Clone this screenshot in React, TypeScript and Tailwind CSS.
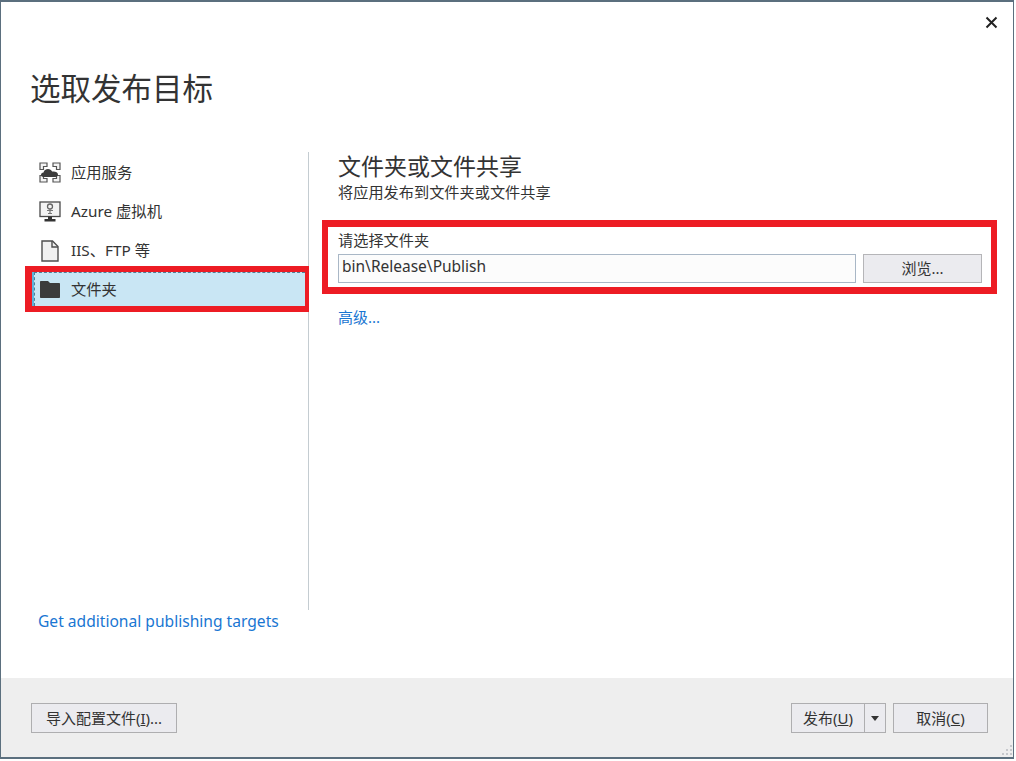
const font = '[font-family:"Noto_Sans","Noto_Sans_CJK_SC",sans-serif]'

const CloudIcon = () => (
  <svg width="22" height="21" viewBox="0 0 22 21" fill="none">
    <path d="M1 7.500V1h7v3.500H4.500v3H1zM14 1h7v6.500h-3.500v-3H14V1zM1 13.500h3.500v3H8V20H1v-6.500zM17.500 13.500H21V20h-7v-3.500h3.500v-3z" fill="#f4f4f4" stroke="#555555" strokeWidth="1.200" />
    <path d="M4.500 15c-1.500 0-2.500-1-2.500-2.300s1-2.300 2.500-2.300c.4-2 2.300-3.400 4.500-3.400 1.900 0 3.400 1 4.100 2.500 2.900-.5 5.900.6 5.900 3 0 1.500-1 2.500-2.500 2.500h-12z" fill="#3c3c3c" />
  </svg>
)

const MonitorIcon = () => (
  <svg width="22" height="21" viewBox="0 0 22 21" fill="none">
    <rect x="1" y="1" width="20" height="14.500" fill="#f3f3f3" stroke="#4a4a4a" strokeWidth="1.300" />
    <circle cx="11" cy="5.500" r="2.500" stroke="#666666" strokeWidth="1.300" />
    <path d="M8 9.500h6M9 12.500h4M11 8v5" stroke="#777777" strokeWidth="1.200" />
    <path d="M9 15.500h4V18H9zM5.500 18h11v2.500h-11z" fill="#333333" />
  </svg>
)

const FileIcon = () => (
  <svg width="18" height="22" viewBox="0 0 18 22" fill="none">
    <path d="M1 1h10.500L17 6.500V21H1V1z" fill="#f1f1f1" stroke="#4f4f4f" strokeWidth="1.400" />
    <path d="M11 1v6h6" stroke="#4f4f4f" strokeWidth="1.400" />
  </svg>
)

const FolderIcon = () => (
  <svg width="20" height="17" viewBox="0 0 20 17">
    <path d="M0 1c0-.6.4-1 1-1h7l2 2h9c.6 0 1 .4 1 1v13c0 .6-.4 1-1 1H1c-.6 0-1-.4-1-1V1z" fill="#3c3c3c" />
  </svg>
)

const Grip = () => (
  <svg width="14" height="14" viewBox="0 0 14 14" className="absolute right-0 bottom-0">
    <path d="M11 2h2v2h-2zM11 6h2v2h-2zM7 6h2v2H7zM11 10h2v2h-2zM7 10h2v2H7zM3 10h2v2H3z" fill="#c6c8cc" />
  </svg>
)

const navItems = [
  { label: '应用服务', icon: <CloudIcon /> },
  { label: 'Azure 虚拟机', icon: <MonitorIcon /> },
  { label: 'IIS、FTP 等', icon: <FileIcon /> },
]

const App = () => {
  return (
    <div className={`w-[1016px] h-[761px] bg-white overflow-hidden text-[#333333] ${font}`}>
      <div className="relative w-[1014px] h-[759px] flex flex-col border-t-2 border-x border-b-2 border-[#5b6f7e]">
        <button className="absolute right-[15px] top-[14px]">
          <svg width="13" height="13" viewBox="0 0 13 13" className="block">
            <path d="M1.500 1.500l10 10M11.500 1.500l-10 10" stroke="#222222" strokeWidth="2" />
          </svg>
        </button>

        <h1 className="pl-[29px] pt-[66px] h-[150px] text-[30.500px] leading-[40px] text-[#333333]">选取发布目标</h1>

        <div className="flex flex-1 min-h-0">
          <div className="relative w-[308px] shrink-0 flex flex-col border-r border-[#c4ccd1] h-[458px]">
            <div className="flex flex-col pt-[1px]">
              {navItems.map((item) => (
                <div key={item.label} className="h-[39px] pl-[38px] flex items-center gap-[10px] text-[15.300px]">
                  <span className="w-[22px] flex justify-center">{item.icon}</span>
                  <span>{item.label}</span>
                </div>
              ))}
              <div className="-mt-[4px] ml-[24px] -mr-[1px] h-[46px] border-y-[6px] border-l-[7px] border-r-[4px] border-[#ed1c24]">
                <div className="h-full border-l-2 border-[#5cb4dc] bg-[#c9e6f4]">
                  <div className="h-full flex items-center gap-[11px] pl-[5px] text-[15.300px] border-t border-l border-dashed border-[#4f7f96]">
                    <FolderIcon />
                    <span>文件夹</span>
                  </div>
                </div>
              </div>
            </div>
          </div>

          <div className="flex-1 flex flex-col pl-[13px] pr-[16px]">
            <div className="pl-[16px] -mt-[1px]">
              <div className="text-[23px] leading-[30px]">文件夹或文件共享</div>
              <div className="text-[15.200px] leading-[20px] mt-[1px]">将应用发布到文件夹或文件共享</div>
            </div>
            <div className="mt-[18px] h-[74px] border-y-[7px] border-x-[6px] border-[#ed1c24] pl-[10px] pr-[9px] flex flex-col">
              <label className="text-[15.200px] leading-[20px] mt-[3px]">请选择文件夹</label>
              <div className="flex gap-[7px] mt-[4px]">
                <input
                  readOnly
                  value="bin\Release\Publish"
                  className="h-[29px] w-[518px] px-[3px] pb-[5px] text-[15.500px] bg-[#fcfcfc] border border-[#a9b7c6] outline-none text-[#333333]"
                />
                <button className="h-[29px] flex-1 text-[15px] bg-[#ebebef] border border-[#b5b5b8]">浏览...</button>
              </div>
            </div>
            <a className="ml-[16px] mt-[13px] text-[15px] leading-[20px] text-[#1976d2]">高级...</a>
          </div>
        </div>

        <a className="absolute left-[37px] top-[608px] text-[15.600px] leading-[22px] text-[#1976d2]">Get additional publishing targets</a>

        <div className="relative h-[79px] shrink-0 bg-[#eeeeee] flex items-start justify-between pt-[25px] pl-[30px] pr-[25px]">
          <button className="h-[30px] w-[146px] text-[15px] bg-[#ebebef] border border-[#aeaeb0]">
            导入配置文件(<span className="underline">I</span>)...
          </button>
          <div className="flex gap-[7px]">
            <div className="flex h-[30px] w-[95px] text-[15px] bg-[#ebebef] border border-[#aeaeb0]">
              <button className="flex-1">发布(<span className="underline">U</span>)</button>
              <button className="w-[21px] border-l border-[#aeaeb0] flex items-center justify-center">
                <span className="w-0 h-0 border-x-[4px] border-x-transparent border-t-[5px] border-t-[#333333]" />
              </button>
            </div>
            <button className="h-[30px] w-[95px] text-[15px] bg-[#ebebef] border border-[#aeaeb0]">
              取消(<span className="underline">C</span>)
            </button>
          </div>
          <Grip />
        </div>
      </div>
    </div>
  )
}

export default App
